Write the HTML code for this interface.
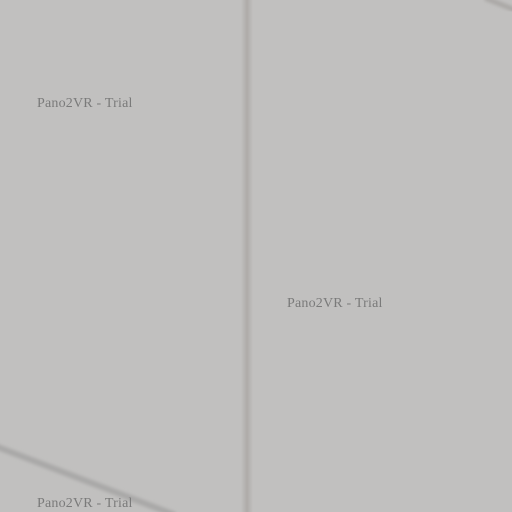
<!DOCTYPE html>
<html><head><style>
body{margin:0;width:512px;height:512px;overflow:hidden;background:#c1c0bf;position:relative;font-family:"Liberation Serif",serif}
.t{position:absolute;font-size:14px;letter-spacing:0.2px;color:#7a7a7a;white-space:nowrap}
</style></head><body>
<svg width="512" height="512" style="position:absolute;left:0;top:0">
<defs><filter id="b"><feGaussianBlur stdDeviation="1.5"/></filter>
<linearGradient id="v" x1="0" x2="1"><stop offset="0" stop-color="#c1c0bf"/><stop offset="0.5" stop-color="#aeaba8"/><stop offset="1" stop-color="#c1c0bf"/></linearGradient></defs>
<rect x="241" y="0" width="12" height="512" fill="url(#v)"/>
<line x1="-5" y1="446" x2="175" y2="515" stroke="#a9a8a7" stroke-width="6" filter="url(#b)"/>
<line x1="485" y1="-2" x2="515" y2="10" stroke="#aaa8a6" stroke-width="5" filter="url(#b)"/>
</svg>
<div class="t" style="left:37px;top:96px">Pano2VR - Trial</div>
<div class="t" style="left:287px;top:296px">Pano2VR - Trial</div>
<div class="t" style="left:37px;top:496px">Pano2VR - Trial</div>
</body></html>
